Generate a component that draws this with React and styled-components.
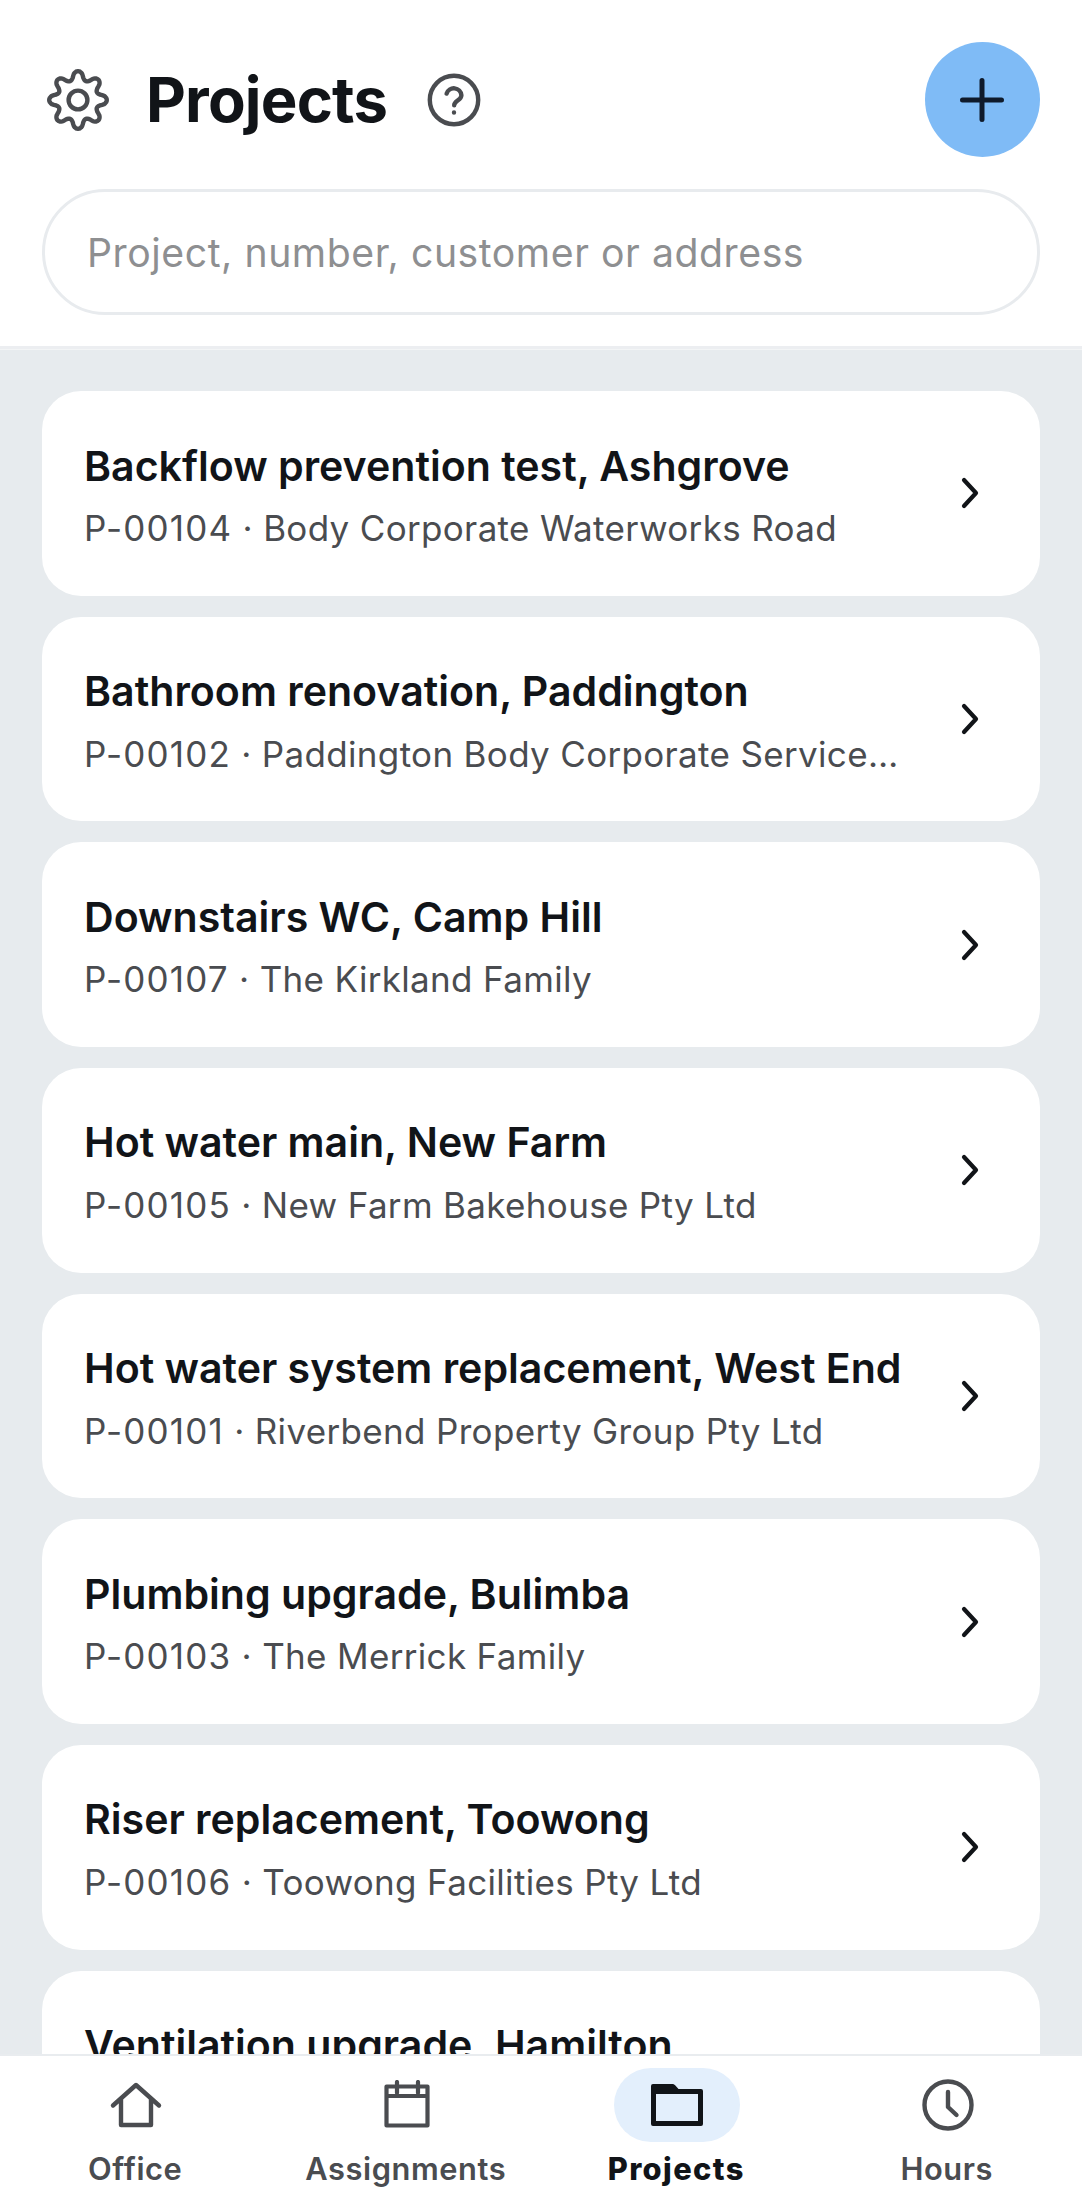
import React from "react";
import styled, { createGlobalStyle } from "styled-components";

const Global = createGlobalStyle`
  html, body { margin: 0; padding: 0; background: #fff; }
  #root { width: 1082px; height: 2202px; }
  * { box-sizing: border-box; }
`;

const Page = styled.div`
  width: 1082px;
  height: 2202px;
  display: flex;
  flex-direction: column;
  overflow: hidden;
  background: #e7ebee;
  font-family: Inter, "Liberation Sans", sans-serif;
  color: #111418;
`;

const Header = styled.header`
  flex: none;
  height: 349px;
  background: #fff;
  border-bottom: 3px solid #eceef1;
  box-shadow: 0 1px 0 #f3f5f6;
  padding: 42px 42.500px 0 42px;
`;

const TopRow = styled.div`
  display: flex;
  align-items: center;
  height: 115px;
`;

const GearButton = styled.div`
  display: flex;
  width: 66px;
  margin-left: 3px;
`;

const Title = styled.h1`
  margin: 0 0 0 35px;
  font-size: 61.6px;
  line-height: 1;
  font-weight: 700;
  letter-spacing: -0.8px;
`;

const HelpButton = styled.div`
  display: flex;
  margin-left: 40px;
`;

const AddButton = styled.div`
  margin-left: auto;
  width: 115px;
  height: 115px;
  border-radius: 50%;
  background: #7fbbf6;
  display: flex;
  align-items: center;
  justify-content: center;
`;

const SearchInput = styled.input`
  display: block;
  width: 100%;
  height: 126px;
  margin-top: 32px;
  padding: 0 42px;
  border: 3px solid #e8ebee;
  border-radius: 63px;
  background: #fff;
  outline: none;
  font-family: inherit;
  font-size: 39.2px;
  letter-spacing: 0.55px;
  color: #111418;
  &::placeholder { color: #8e8f91; opacity: 1; }
`;

const List = styled.main`
  flex: 1;
  min-height: 0;
  overflow: hidden;
  padding: 42px 42.500px 0 42px;
  display: flex;
  flex-direction: column;
  gap: 21px;
`;

const Card = styled.article`
  flex: none;
  height: 204.67px;
  background: #fff;
  border-radius: 39px;
  padding: 0 42px;
  display: flex;
  align-items: center;
  gap: 55px;
`;

const CardText = styled.div`
  flex: 1;
  min-width: 0;
  align-self: flex-start;
  padding-top: 49.500px;
`;

const CardTitle = styled.div`
  font-size: 41.1px;
  line-height: 50px;
  font-weight: 600;
  white-space: nowrap;
`;

const CardSub = styled.div`
  margin-top: 12.500px;
  font-size: 35px;
  line-height: 50px;
  letter-spacing: 0.33px;
  color: #4a4c50;
  white-space: nowrap;
  overflow: hidden;
  text-overflow: ellipsis;
`;

const ProjectNumber = styled.span`
  letter-spacing: 1.2px;
`;

const Chevron = styled.svg`
  flex: none;
  margin-right: 18.500px;
`;

const TabBar = styled.nav`
  flex: none;
  height: 148px;
  background: #fff;
  border-top: 2px solid #e9ecef;
  display: grid;
  grid-template-columns: repeat(4, 1fr);
`;

const Tab = styled.div`
  display: flex;
  flex-direction: column;
  align-items: center;
  padding-top: 12px;
`;

const IconPill = styled.div`
  width: 126px;
  height: 74px;
  margin-left: 1.500px;
  border-radius: 37px;
  display: flex;
  align-items: center;
  justify-content: center;
  background: ${(p) => (p.$active ? "#e3effc" : "transparent")};
`;

const TabLabel = styled.div`
  margin-top: 7px;
  font-size: 30.8px;
  line-height: 40px;
  letter-spacing: ${(p) => (p.$active ? "1.4px" : "0.6px")};
  font-weight: ${(p) => (p.$active ? 800 : 600)};
  color: ${(p) => (p.$active ? "#111418" : "#4a4c50")};
`;

const gearPath = (() => {
  const pts = [];
  const n = 160;
  for (let i = 0; i < n; i++) {
    const t = (i / n) * Math.PI * 2;
    const c = Math.cos(8 * t);
    const s = Math.sign(c) * Math.pow(Math.abs(c), 0.7);
    const r = 24.6 + 4.2 * s;
    pts.push(`${(33 + r * Math.sin(t)).toFixed(2)} ${(33 - r * Math.cos(t)).toFixed(2)}`);
  }
  return `M${pts.join("L")}Z`;
})();

const GearIcon = () => (
  <svg width="66" height="66" viewBox="0 0 66 66" fill="none" stroke="#4a4c50" strokeWidth="4.4" strokeLinejoin="round">
    <path d={gearPath} />
    <circle cx="33" cy="33" r="9.4" />
  </svg>
);

const HelpIcon = () => (
  <svg width="54" height="54" viewBox="0 0 54 54" fill="none" stroke="#4a4c50" strokeWidth="4.4" strokeLinecap="round">
    <circle cx="27" cy="27" r="24.2" />
    <path d="M19.6 20.6a7.6 7.6 0 0 1 14.8 1.6c0 5-7.2 5.6-7.2 10" />
    <circle cx="27" cy="39.5" r="1.4" fill="#4a4c50" strokeWidth="1.6" />
  </svg>
);

const PlusIcon = () => (
  <svg width="44" height="44" viewBox="0 0 44 44" fill="none" stroke="#0f1a2b" strokeWidth="5" strokeLinecap="round">
    <path d="M22 2.5v39M2.5 22h39" />
  </svg>
);

const ChevronIcon = () => (
  <Chevron width="18" height="32" viewBox="0 0 18 32" fill="none" stroke="#111418" strokeWidth="4.2" strokeLinecap="round" strokeLinejoin="round">
    <path d="M3 3l12 13L3 29" />
  </Chevron>
);

const HomeIcon = () => (
  <svg width="54" height="46" viewBox="0 0 54 46" fill="none" stroke="#4a4c50" strokeWidth="4.4" strokeLinecap="round" strokeLinejoin="round">
    <path d="M4 23.500L27 3l23 20.500M12 17v26h30V17" />
  </svg>
);

const CalendarIcon = () => (
  <svg width="48" height="50" viewBox="0 0 48 50" fill="none" stroke="#4a4c50" strokeWidth="4.2" strokeLinecap="round" strokeLinejoin="round">
    <path d="M3.500 6.500h41v39h-41zM3.500 16h41M14 2v11M35 2v11" />
  </svg>
);

const FolderIcon = () => (
  <svg width="54" height="44" viewBox="0 0 54 44" fill="none">
    <path
      fill="#111418"
      d="M3 1h19c1.500 0 2.700.6 3.600 1.700L28.500 6H51a2 2 0 0 1 2 2v33a2 2 0 0 1-2 2H3a2 2 0 0 1-2-2V3a2 2 0 0 1 2-2zM6 11v27h42V11z"
      fillRule="evenodd"
    />
  </svg>
);

const ClockIcon = () => (
  <svg width="54" height="54" viewBox="0 0 54 54" fill="none" stroke="#4a4c50" strokeWidth="4.4" strokeLinecap="round" strokeLinejoin="round">
    <circle cx="27" cy="27" r="23.500" />
    <path d="M27 14v15l8.500 8" />
  </svg>
);

const projects = [
  ["Backflow prevention test, Ashgrove", "P-00104", "Body Corporate Waterworks Road"],
  ["Bathroom renovation, Paddington", "P-00102", "Paddington Body Corporate Services Pty Ltd"],
  ["Downstairs WC, Camp Hill", "P-00107", "The Kirkland Family"],
  ["Hot water main, New Farm", "P-00105", "New Farm Bakehouse Pty Ltd"],
  ["Hot water system replacement, West End", "P-00101", "Riverbend Property Group Pty Ltd"],
  ["Plumbing upgrade, Bulimba", "P-00103", "The Merrick Family"],
  ["Riser replacement, Toowong", "P-00106", "Toowong Facilities Pty Ltd"],
  ["Ventilation upgrade, Hamilton", "", ""],
];

const tabs = [
  ["Office", HomeIcon],
  ["Assignments", CalendarIcon],
  ["Projects", FolderIcon],
  ["Hours", ClockIcon],
];

export default function App() {
  return (
    <Page>
      <Global />
      <Header>
        <TopRow>
          <GearButton><GearIcon /></GearButton>
          <Title>Projects</Title>
          <HelpButton><HelpIcon /></HelpButton>
          <AddButton><PlusIcon /></AddButton>
        </TopRow>
        <SearchInput placeholder="Project, number, customer or address" readOnly />
      </Header>
      <List>
        {projects.map(([title, number, customer]) => (
          <Card key={title}>
            <CardText>
              <CardTitle>{title}</CardTitle>
              {number && (
                <CardSub>
                  <ProjectNumber>{number}</ProjectNumber> · {customer}
                </CardSub>
              )}
            </CardText>
            <ChevronIcon />
          </Card>
        ))}
      </List>
      <TabBar>
        {tabs.map(([label, Icon]) => (
          <Tab key={label}>
            <IconPill $active={label === "Projects"}><Icon /></IconPill>
            <TabLabel $active={label === "Projects"}>{label}</TabLabel>
          </Tab>
        ))}
      </TabBar>
    </Page>
  );
}
